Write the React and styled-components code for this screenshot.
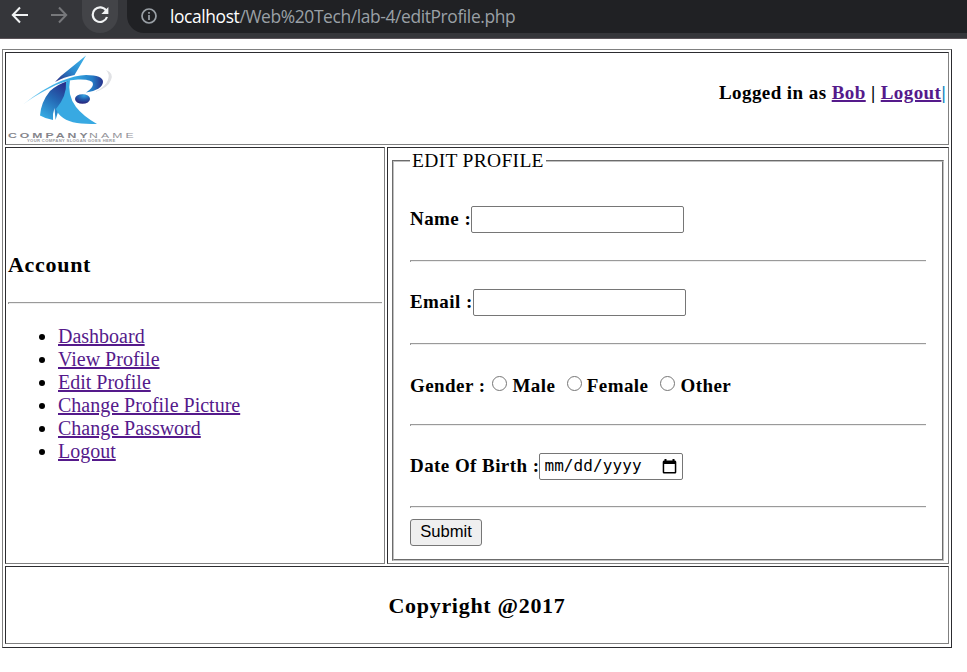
import React from "react";
import styled, { createGlobalStyle } from "styled-components";

const GlobalStyle = createGlobalStyle`
  *, *::before, *::after { box-sizing: border-box; }
  body {
    margin: 0;
    background: #fff;
    color: #000;
    font-family: "Liberation Serif", "Times New Roman", serif;
    font-size: 20px;
    line-height: 23px;
    overflow: hidden;
  }
`;

const BrowserBar = styled.header`
  display: flex;
  height: 39px;
  background: #35363a;
  border-bottom: 1px solid #5a5358;
`;

const NavButton = styled.span`
  display: flex;
  align-items: center;
  justify-content: center;
  width: 39px;
  height: 30px;
`;

const ReloadButton = styled(NavButton)`
  width: 36px;
  height: 33px;
  margin: 0 9px 0 4px;
  padding-bottom: 3px;
  background: #434448;
  border-radius: 0 0 18px 18px / 0 0 18px 18px;
`;

const AddressBar = styled.div`
  display: flex;
  flex: 1;
  align-items: center;
  height: 33px;
  padding: 0 0 1px 14px;
  gap: 13px;
  background: #202124;
  border-radius: 0 0 0 17px;
`;

const Url = styled.span`
  color: #9aa0a6;
  font: 17.4px/30px "Open Sans", "Noto Sans", sans-serif;
  letter-spacing: -0.38px;
  white-space: nowrap;
`;

const Host = styled.span`
  color: #fff;
`;

const Table = styled.main`
  display: grid;
  grid-template-columns: 380px 562px;
  grid-template-rows: 93px 417px 78px;
  gap: 2px;
  width: 950px;
  height: 599px;
  margin: 10px 0 0 2px;
  padding: 2px;
  border: 1px solid;
  border-color: #808080 #2c2c30 #2c2c30 #808080;
`;

const Cell = styled.section`
  min-width: 0;
  border: 1px solid;
  border-color: #2c2c30 #808080 #808080 #2c2c30;
`;

const HeaderCell = styled(Cell)`
  grid-column: 1 / -1;
  display: flex;
  justify-content: space-between;
  padding: 2px;
`;

const LoginStatus = styled.h4`
  margin: 26px 0 0;
  font-size: 19px;
  letter-spacing: 0.43px;
  white-space: nowrap;
`;

const Divider = styled.span`
  color: #0b7fbd;
`;

const Link = styled.a`
  color: #551a8b;
  text-decoration: underline;
  text-decoration-thickness: 2px;
`;

const AccountCell = styled(Cell)`
  padding: 104px 2px 0;
`;

const Title = styled.h3`
  margin: 0;
  font-size: 22px;
  line-height: 26px;
  letter-spacing: 0.7px;
`;

const Rule = styled.hr`
  height: 2px;
  margin: ${(p) => p.$margin || "0"};
  border: 0;
  border-top: 1px solid #9a9a9a;
  border-left: 1px solid #9a9a9a;
  background: #eee;
`;

const Menu = styled.ul`
  margin: 21px 0 0;
  padding-left: 50px;
`;

const FormCell = styled(Cell)`
  padding: 2px 4px;
`;

const Fieldset = styled.fieldset`
  height: 411px;
  margin: 0;
  padding: 0 16px;
  border: 2px groove #c0c0c0;
`;

const Legend = styled.legend`
  height: 21px;
  padding: 0 2px;
  line-height: 21px;
  font-size: 19.5px;
  letter-spacing: 0.32px;
`;

const Field = styled.label`
  display: flex;
  align-items: center;
  height: 27px;
  margin-top: ${(p) => p.$top || "0"};
  font-size: 19px;
  font-weight: bold;
  letter-spacing: 0.43px;
  white-space: nowrap;
`;

const FieldName = styled.span`
  padding-bottom: 2px;
`;

const TextInput = styled.input`
  width: 213px;
  height: 27px;
  border: 1px solid #767676;
  border-radius: 2px;
  background: #fff;
`;

const Group = styled.div`
  display: flex;
  align-items: center;
  height: 28px;
  font-size: 19px;
  font-weight: bold;
  letter-spacing: 0.43px;
  white-space: nowrap;
`;

const Radio = styled.input`
  appearance: none;
  width: 15px;
  height: 15px;
  margin: 0 5px 3px ${(p) => p.$gap};
  border: 1px solid #767676;
  border-radius: 50%;
  background: #fff;
`;

const DateInput = styled.span`
  display: flex;
  align-items: center;
  justify-content: space-between;
  width: 144px;
  height: 27px;
  padding: 0 5px 0 4px;
  border: 1px solid #767676;
  border-radius: 2px;
  font: 16px/24px "DejaVu Sans Mono", monospace;
  letter-spacing: 0.1px;
`;

const Submit = styled.button`
  display: block;
  width: 72px;
  height: 27px;
  margin-top: 11px;
  padding: 0 0 2px;
  color: #000;
  background: #efefef;
  border: 1px solid #767676;
  border-radius: 3px;
  font: 16.6px/23px "Liberation Sans", Arial, sans-serif;
`;

const FooterCell = styled(Cell)`
  grid-column: 1 / -1;
  padding-top: 26px;
  text-align: center;
`;

const LogoDrawing = styled.svg`
  display: block;
  flex: none;
`;

function Logo() {
  return (
    <LogoDrawing width="130" height="88" viewBox="8 55 130 88" role="img" aria-label="Company name">
      <defs>
        <linearGradient id="legs" x1="0.7" y1="0" x2="0.2" y2="1">
          <stop offset="0" stopColor="#27318c" />
          <stop offset="0.45" stopColor="#2468b4" />
          <stop offset="1" stopColor="#38aee5" />
        </linearGradient>
        <linearGradient id="peak" x1="1" y1="0" x2="0" y2="1">
          <stop offset="0" stopColor="#41b9ed" />
          <stop offset="0.5" stopColor="#2b8bd0" />
          <stop offset="1" stopColor="#292a82" />
        </linearGradient>
        <linearGradient id="swoosh" x1="23" y1="0" x2="103" y2="0" gradientUnits="userSpaceOnUse">
          <stop offset="0" stopColor="#9bd9f4" />
          <stop offset="0.3" stopColor="#49b5e8" />
          <stop offset="0.65" stopColor="#35a9e3" />
          <stop offset="0.87" stopColor="#247bc5" />
          <stop offset="1" stopColor="#28318b" />
        </linearGradient>
        <radialGradient id="ball" cx="0.6" cy="0.15" r="0.8">
          <stop offset="0" stopColor="#32a5e2" />
          <stop offset="0.5" stopColor="#235cac" />
          <stop offset="1" stopColor="#28277f" />
        </radialGradient>
      </defs>
      <path d="M106 70Q114 73 111 80Q108 88 95 92Q106 86 108 80Q110 74 106 70Z" fill="#e1e2e5" />
      <path d="M86 55.5L74.5 75Q64 77 55 82Q60 76 67 71Z" fill="url(#peak)" />
      <path d="M50 91Q58 84 68 81Q70 98 58 112L55.500 120L54.500 108Q52.500 113 53 120Q46 119 40 115.500Q41 102 50 91Z" fill="url(#legs)" />
      <path d="M66 82L70 80Q67 95 76 107Q83 116 97 124Q85 124 77 123Q60 120 56 109Q67 96 66 82Z" fill="#38a9e2" />
      <path d="M23 104.500Q42 89 61 81Q76 75 86 75Q103 75 103 82Q102 90 86 92.500Q93 88 93 84Q93 79 78 79.500Q64 80 48 89Q33 97 23 104.500Z" fill="url(#swoosh)" />
      <ellipse cx="82.500" cy="99" rx="7.500" ry="4.800" fill="url(#ball)" />
      <g fontFamily="Liberation Sans, Arial, sans-serif">
        <text transform="translate(8 137.500) scale(1.750 1)" fill="#85858b" fontSize="7" fontWeight="bold" textLength="45.500" lengthAdjust="spacing">COMPANY</text>
        <text transform="translate(89 137.500) scale(1.750 1)" fill="#929298" fontSize="7" textLength="25.500" lengthAdjust="spacing">NAME</text>
        <text transform="translate(27 142) scale(1.400 1)" fill="#9a9aa0" fontSize="3" fontWeight="bold" textLength="63" lengthAdjust="spacing">YOUR COMPANY SLOGAN GOES HERE</text>
      </g>
    </LogoDrawing>
  );
}

const menuItems = [
  "Dashboard",
  "View Profile",
  "Edit Profile",
  "Change Profile Picture",
  "Change Password",
  "Logout",
];

export default function App() {
  return (
    <>
      <GlobalStyle />
      <BrowserBar>
        <NavButton>
          <svg width="18" height="18" viewBox="0 0 18 18" fill="none" stroke="#f1f3f4" strokeWidth="2">
            <path d="M17 9H2M9 1.5 1.8 9 9 16.5" />
          </svg>
        </NavButton>
        <NavButton>
          <svg width="18" height="18" viewBox="0 0 18 18" fill="none" stroke="#77787b" strokeWidth="2">
            <path d="M1 9h15M9 1.5 16.2 9 9 16.5" />
          </svg>
        </NavButton>
        <ReloadButton>
          <svg width="18" height="18" viewBox="0 0 18 18" fill="none">
            <path d="M15.2 4.7A7.3 7.3 0 1 0 16 11" stroke="#f1f3f4" strokeWidth="2.2" />
            <path d="M17.4 1v7h-7z" fill="#f1f3f4" />
          </svg>
        </ReloadButton>
        <AddressBar>
          <svg width="16" height="16" viewBox="0 0 16 16" fill="none" stroke="#9aa0a6" strokeWidth="1.7">
            <circle cx="8" cy="8" r="7" />
            <path d="M8 7v5M8 4v1.8" />
          </svg>
          <Url>
            <Host>localhost</Host>/Web%20Tech/lab-4/editProfile.php
          </Url>
        </AddressBar>
      </BrowserBar>
      <Table>
        <HeaderCell>
          <Logo />
          <LoginStatus>
            Logged in as <Link>Bob</Link> | <Link>Logout</Link>
            <Divider>|</Divider>
          </LoginStatus>
        </HeaderCell>
        <AccountCell>
          <Title>Account</Title>
          <Rule $margin="24px 0 0" />
          <Menu>
            {menuItems.map((item) => (
              <li key={item}>
                <Link>{item}</Link>
              </li>
            ))}
          </Menu>
        </AccountCell>
        <FormCell>
          <Fieldset>
            <Legend>EDIT PROFILE</Legend>
            <Field $top="35px">
              <FieldName>Name :</FieldName>
              <TextInput type="text" />
            </Field>
            <Rule $margin="27px 0" />
            <Field>
              <FieldName>Email :</FieldName>
              <TextInput type="text" />
            </Field>
            <Rule $margin="27px 0 26px" />
            <Group>
              Gender :
              <Radio type="radio" name="gender" $gap="7px" />
              Male
              <Radio type="radio" name="gender" $gap="11.5px" />
              Female
              <Radio type="radio" name="gender" $gap="12px" />
              Other
            </Group>
            <Rule $margin="25px 0 26px" />
            <Group>
              <FieldName>Date Of Birth :</FieldName>
              <DateInput>
                mm/dd/yyyy
                <svg width="15" height="15" viewBox="0 0 15 15">
                  <path d="M2.5 0h2v1.5h6V0h2v1.5h.5Q14.3 1.5 14.3 3v10.2q0 1.3-1.3 1.3H2Q.7 14.5.7 13.2V3Q.7 1.5 2 1.5h.5zM2.2 5v8h10.6V5z" fillRule="evenodd" />
                </svg>
              </DateInput>
            </Group>
            <Rule $margin="26px 0 0" />
            <Submit type="button">Submit</Submit>
          </Fieldset>
        </FormCell>
        <FooterCell>
          <Title>Copyright @2017</Title>
        </FooterCell>
      </Table>
    </>
  );
}
